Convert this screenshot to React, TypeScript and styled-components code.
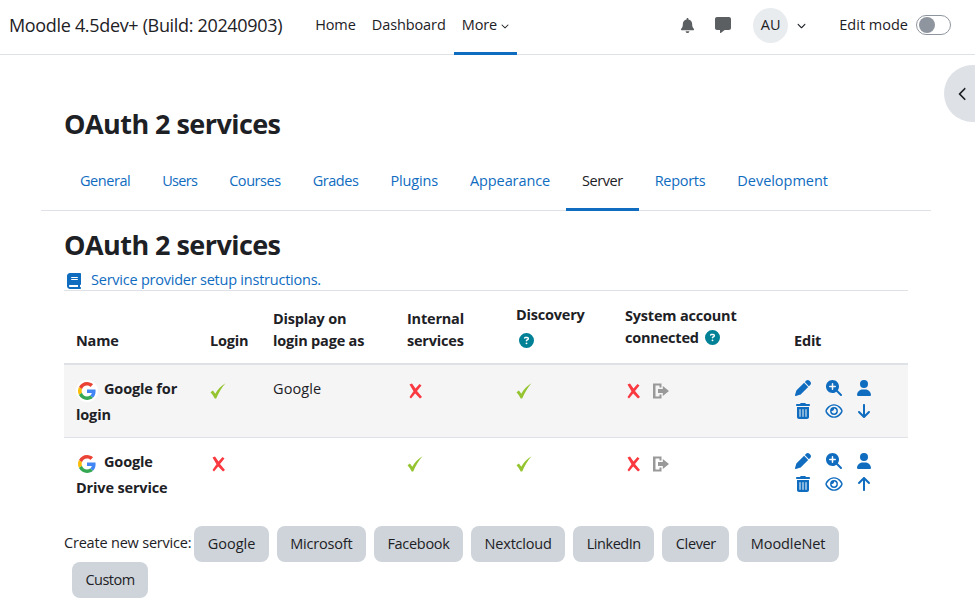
import styled, { createGlobalStyle } from "styled-components";
import {
  FaArrowDown,
  FaArrowUp,
  FaBell,
  FaBook,
  FaChevronDown,
  FaChevronLeft,
  FaCircleQuestion,
  FaMagnifyingGlassPlus,
  FaMessage,
  FaPen,
  FaRegEye,
  FaTrashCan,
  FaUser,
} from "react-icons/fa6";

const GlobalStyle = createGlobalStyle`
  html, body {
    margin: 0;
    padding: 0;
    background: #fff;
  }
  body {
    font-family: "Open Sans", "Noto Sans", "Liberation Sans", sans-serif;
    font-size: 14.5px;
    line-height: 22.5px;
    color: #1d2125;
    letter-spacing: -0.2px;
  }
`;

const GoogleIcon = () => (
  <GoogleBadge>
    <svg viewBox="0 0 48 48" width="18" height="18">
      <path fill="#EA4335" d="M24 9.500c3.500 0 6.700 1.200 9.200 3.600l6.900-6.900C35.900 2.400 30.500 0 24 0 14.600 0 6.500 5.400 2.600 13.200l8 6.200C12.400 13.700 17.700 9.500 24 9.500z" />
      <path fill="#4285F4" d="M46.900 24.500c0-1.600-.1-3.100-.4-4.500H24v9h12.900c-.6 3-2.200 5.500-4.700 7.200l7.700 6c4.500-4.200 7-10.300 7-17.700z" />
      <path fill="#FBBC05" d="M10.500 28.600c-.5-1.500-.8-3-.8-4.600s.3-3.100.8-4.600l-8-6.200C.9 16.400 0 20.100 0 24s.9 7.600 2.600 10.800l7.900-6.200z" />
      <path fill="#34A853" d="M24 48c6.500 0 11.900-2.100 15.900-5.800l-7.700-6c-2.200 1.400-4.900 2.300-8.200 2.300-6.300 0-11.600-4.200-13.500-9.900l-7.900 6.200C6.500 42.600 14.600 48 24 48z" />
    </svg>
  </GoogleBadge>
);

const Check = () => (
  <MarkSvg viewBox="0 0 16 16">
    <path fill="#94c42f" d="M0.500 9.300l2.400-1.700 2.400 3.200C7.500 6.800 10.800 3 15.500 0.300 11.800 4.500 8.700 9.700 6.200 15.600H4.700C3.700 13.200 2.300 11.100 0.500 9.300z" />
  </MarkSvg>
);

const Cross = () => (
  <MarkSvg viewBox="0 0 16 16">
    <path fill="#f9383f" d="M2.500 1.500L5 0.500 8.500 5.500 12.500 1 14.500 2.500 10 8 15 14 13 15.500 8.200 10.500 4 15.500 2.500 14 6.500 8.200z" />
  </MarkSvg>
);

const SignOut = () => (
  <MarkSvg viewBox="0 0 16 16">
    <path fill="#999" d="M0 0.500h8.500v4H6.500v-2H2.500v11h4v-2h2v4H0z" />
    <path fill="#999" d="M9.800 3L16 8l-6.200 5v-3H5V6h4.800z" />
  </MarkSvg>
);

type ServiceProps = {
  first: string;
  second: string;
  login: boolean;
  display?: string;
  internal: boolean;
  up?: boolean;
  shaded?: boolean;
};

const ServiceRow = ({ first, second, login, display, internal, up, shaded }: ServiceProps) => (
  <Row $shaded={shaded}>
    <NameCell>
      <GoogleIcon />
      {first}
      <br />
      {second}
    </NameCell>
    <Cell>{login ? <Check /> : <Cross />}</Cell>
    <DisplayCell>{display}</DisplayCell>
    <Cell>{internal ? <Check /> : <Cross />}</Cell>
    <Cell>
      <Check />
    </Cell>
    <Cell>
      <SystemMarks>
        <Cross />
        <SignOut />
      </SystemMarks>
    </Cell>
    <Cell>
      <EditGrid>
        <FaPen />
        <FaMagnifyingGlassPlus />
        <FaUser />
        <FaTrashCan />
        <EyeIcon />
        {up ? <FaArrowUp /> : <FaArrowDown />}
      </EditGrid>
    </Cell>
  </Row>
);

const HelpBadge = () => (
  <BadgeIcon>
    <FaCircleQuestion size={15} />
  </BadgeIcon>
);

// label + letter spacing, the fallback font runs a bit off per word
const tabs: [string, number][] = [
  ["General", -0.45],
  ["Users", -0.7],
  ["Courses", -0.45],
  ["Grades", -0.45],
  ["Plugins", -0.15],
  ["Appearance", -0.1],
  ["Server", -0.45],
  ["Reports", -0.3],
  ["Development", -0.03],
];

const providers: [string, number][] = [
  ["Google", -0.05],
  ["Microsoft", -0.2],
  ["Facebook", -0.3],
  ["Nextcloud", -0.2],
  ["LinkedIn", -0.45],
  ["Clever", -0.37],
  ["MoodleNet", -0.1],
  ["Custom", -0.53],
];

export default function App() {
  return (
    <>
      <GlobalStyle />
      <Navbar>
        <Brand>Moodle 4.5dev+ (Build: 20240903)</Brand>
        <PrimaryNav>
          <NavItem>Home</NavItem>
          <NavItem>Dashboard</NavItem>
          <NavItem $active>
            More <FaChevronDown size={8} />
          </NavItem>
        </PrimaryNav>
        <UserArea>
          <NavIcon>
            <FaBell size={15} />
          </NavIcon>
          <NavIcon>
            <FaMessage size={16} />
          </NavIcon>
          <Avatar>AU</Avatar>
          <FaChevronDown size={9} />
          <EditMode>
            Edit mode
            <Toggle>
              <Thumb />
            </Toggle>
          </EditMode>
        </UserArea>
      </Navbar>
      <DrawerHandle>
        <FaChevronLeft size={14} />
      </DrawerHandle>
      <Page>
        <PageTitle>OAuth 2 services</PageTitle>
        <Tabs>
          {tabs.map(([t, tracking]) => (
            <Tab key={t} $active={t === "Server"} $tracking={tracking}>
              {t}
            </Tab>
          ))}
        </Tabs>
        <Content>
          <SectionTitle>OAuth 2 services</SectionTitle>
          <HelpLink>
            <FaBook size={16} />
            Service provider setup instructions.
          </HelpLink>
          <Table>
            <colgroup>
              <col style={{ width: 134 }} />
              <col style={{ width: 63 }} />
              <col style={{ width: 134 }} />
              <col style={{ width: 109 }} />
              <col style={{ width: 109 }} />
              <col style={{ width: 169 }} />
              <col style={{ width: 126 }} />
            </colgroup>
            <thead>
              <tr>
                <Head>Name</Head>
                <Head>Login</Head>
                <Head>
                  Display on
                  <br />
                  login page as
                </Head>
                <Head>
                  Internal
                  <br />
                  services
                </Head>
                <DiscoveryHead>
                  Discovery
                  <HelpLine>
                    <HelpBadge />
                  </HelpLine>
                </DiscoveryHead>
                <SystemHead>
                  System account
                  <br />
                  connected <HelpBadge />
                </SystemHead>
                <Head>Edit</Head>
              </tr>
            </thead>
            <tbody>
              <ServiceRow first="Google for" second="login" login display="Google" internal={false} shaded />
              <ServiceRow first="Google" second="Drive service" login={false} internal up />
            </tbody>
          </Table>
          <CreateRow>
            <CreateLabel>Create new service:</CreateLabel>
            {providers.map(([p, tracking]) => (
              <Provider key={p} $tracking={tracking}>
                {p}
              </Provider>
            ))}
          </CreateRow>
        </Content>
      </Page>
    </>
  );
}

const Navbar = styled.header`
  display: flex;
  align-items: stretch;
  height: 54px;
  padding: 0 24px 0 9px;
  border-bottom: 1px solid #dee2e6;
`;

const Brand = styled.div`
  display: flex;
  align-items: center;
  padding-bottom: 4px;
  font-size: 18px;
  letter-spacing: -0.33px;
  margin-right: 25px;
`;

const PrimaryNav = styled.nav`
  display: flex;
  align-items: stretch;
`;

const NavItem = styled.a<{ $active?: boolean }>`
  display: flex;
  align-items: center;
  gap: 4px;
  padding: 0 8px 1px;
  margin-bottom: -1px;
  letter-spacing: -0.1px;
  border-bottom: 3px solid ${(p) => (p.$active ? "#0f6cbf" : "transparent")};
`;

const UserArea = styled.div`
  display: flex;
  align-items: center;
  margin-left: auto;
  padding-bottom: 4px;
`;

const NavIcon = styled.span`
  display: flex;
  width: 35px;
  justify-content: center;
  color: #5c5f62;
`;

const Avatar = styled.div`
  display: flex;
  align-items: center;
  justify-content: center;
  width: 35px;
  height: 35px;
  margin: 0 9px 0 13px;
  border-radius: 50%;
  background: #e9ecef;
  letter-spacing: 0.3px;
`;

const EditMode = styled.div`
  display: flex;
  align-items: center;
  gap: 8px;
  margin-left: 33px;
  letter-spacing: 0;
`;

const Toggle = styled.div`
  display: flex;
  align-items: center;
  width: 35px;
  height: 20px;
  box-sizing: border-box;
  padding: 0 2px;
  border: 1px solid #8f959e;
  border-radius: 10px;
`;

const Thumb = styled.div`
  width: 16px;
  height: 16px;
  border-radius: 50%;
  background: #8f959e;
`;

const DrawerHandle = styled.div`
  position: absolute;
  top: 65px;
  right: 0;
  width: 31px;
  height: 57px;
  display: flex;
  align-items: center;
  padding-left: 12px;
  box-sizing: border-box;
  background: #dee2e6;
  border-radius: 29px 0 0 29px;
`;

const Page = styled.main`
  padding: 51px 44px 0 41px;
`;

const PageTitle = styled.h1`
  margin: 0 0 20px 23px;
  font-size: 27px;
  line-height: 36px;
  font-weight: 700;
  letter-spacing: -0.55px;
`;

const Tabs = styled.nav`
  display: flex;
  padding-left: 23px;
  border-bottom: 1px solid #dee2e6;
`;

const Tab = styled.a<{ $active?: boolean; $tracking: number }>`
  padding: 8px 16px 15px;
  margin-bottom: -1px;
  letter-spacing: ${(p) => p.$tracking}px;
  color: ${(p) => (p.$active ? "#1d2125" : "#0f6cbf")};
  border-bottom: 3px solid ${(p) => (p.$active ? "#0f6cbf" : "transparent")};
`;

const Content = styled.div`
  padding: 0 23px;
`;

const SectionTitle = styled.h2`
  margin: 16px 0 7px;
  font-size: 27px;
  line-height: 36px;
  font-weight: 700;
  letter-spacing: -0.55px;
`;

const HelpLink = styled.a`
  display: flex;
  align-items: center;
  gap: 9px;
  padding: 2px 0 0 2px;
  height: 18px;
  letter-spacing: -0.23px;
  color: #0f6cbf;
  border-bottom: 1px solid #dee2e6;
`;

const Table = styled.table`
  width: 844px;
  table-layout: fixed;
  border-collapse: collapse;
`;

const Head = styled.th`
  height: 73px;
  box-sizing: border-box;
  padding: 12px 12px 10px;
  text-align: left;
  vertical-align: bottom;
  font-weight: 700;
  border-bottom: 2px solid #dee2e6;
`;

const DiscoveryHead = styled(Head)`
  padding-bottom: 9px;
`;

const SystemHead = styled(Head)`
  padding-bottom: 14px;
  line-height: 22px;
`;

const HelpLine = styled.div`
  height: 24px;
  padding-top: 3px;
`;

const BadgeIcon = styled.span`
  display: inline-flex;
  vertical-align: -2px;
  margin-left: 3px;
  color: #008196;
`;

const Row = styled.tr<{ $shaded?: boolean }>`
  background: ${(p) => (p.$shaded ? "#f5f5f6" : "#fff")};
  border-bottom: 1px solid #dee2e6;

  &:last-child {
    border-bottom: 0;
  }
`;

const Cell = styled.td`
  padding: 11px 12px 9px;
  vertical-align: top;
`;

const NameCell = styled(Cell)`
  font-weight: 700;
  line-height: 26px;
  letter-spacing: -0.15px;
`;

const DisplayCell = styled(Cell)`
  padding-top: 13px;
  letter-spacing: 0.1px;
`;

const GoogleBadge = styled.span`
  display: inline-flex;
  align-items: center;
  justify-content: center;
  width: 22px;
  height: 22px;
  margin-right: 6px;
  border-radius: 50%;
  background: #fff;
  vertical-align: -6px;
`;

const MarkSvg = styled.svg`
  display: block;
  width: 16px;
  height: 16px;
  margin-top: 7px;
`;

const SystemMarks = styled.div`
  display: flex;
  gap: 12px;
`;

const EditGrid = styled.div`
  display: grid;
  grid-template-columns: repeat(3, 16px);
  column-gap: 14.5px;
  row-gap: 7px;
  margin-top: 4px;
  padding-left: 1px;
  color: #0f6cbf;

  svg {
    width: 16px;
    height: 16px;
  }
`;

const EyeIcon = styled(FaRegEye)`
  transform: scale(1.1);
`;

const CreateRow = styled.div`
  display: flex;
  flex-wrap: wrap;
  align-items: center;
  margin-top: 16px;
`;

const CreateLabel = styled.span`
  margin: 0 -5px 1px 0;
`;

const Provider = styled.button<{ $tracking: number }>`
  height: 36px;
  margin-left: 8px;
  padding: 2px 13.5px 0;
  border: 0;
  border-radius: 8px;
  background: #ced4da;
  color: #1d2125;
  font: inherit;
  letter-spacing: ${(p) => p.$tracking}px;
`;
